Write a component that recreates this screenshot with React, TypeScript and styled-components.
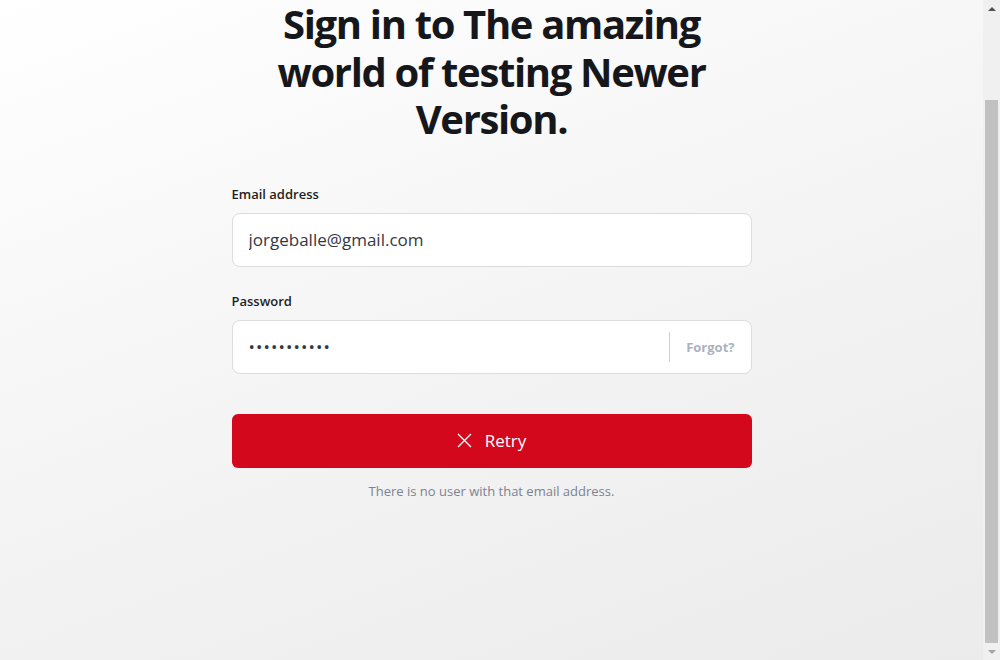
import React from "react";
import styled, { createGlobalStyle } from "styled-components";

const GlobalStyle = createGlobalStyle`
	html, body {
		margin: 0;
		padding: 0;
	}
	body {
		font-family: "Open Sans", "Noto Sans", sans-serif;
		background: #f0f0f0;
		overflow: hidden;
	}
`;

const Frame = styled.div`
	display: flex;
	height: 660px;
`;

const Main = styled.main`
	flex: 1;
	min-width: 0;
	overflow: hidden;
	display: flex;
	flex-direction: column;
	align-items: center;
	background: linear-gradient(160deg, #ffffff 0%, #f4f4f4 50%, #ebebeb 100%);
`;

const ScrollBar = styled.div`
	width: 17px;
	flex-shrink: 0;
	display: flex;
	flex-direction: column;
	background: #f0f0f0;
`;

const ScrollArrow = styled.div`
	height: 17px;
	display: flex;
	align-items: center;
	justify-content: center;
`;

const ScrollTrack = styled.div`
	flex: 1;
	display: flex;
	flex-direction: column;
	padding: 83px 2px 0;
`;

const ScrollThumb = styled.div`
	flex: 1;
	background: #c1c1c1;
`;

const Title = styled.h1`
	margin: 0;
	max-width: 460px;
	font-size: 40px;
	line-height: 47.5px;
	font-weight: 700;
	text-align: center;
	color: #16171b;
	letter-spacing: -1.35px;
`;

const Form = styled.form`
	width: 520px;
	margin-top: 42px;
	display: flex;
	flex-direction: column;
`;

const Field = styled.div<{ $gap?: number }>`
	display: flex;
	flex-direction: column;
	margin-top: ${p => p.$gap ?? 0}px;
`;

const Label = styled.label`
	font-size: 13px;
	line-height: 18px;
	font-weight: 600;
	color: #1f1f1f;
	margin-bottom: 10px;
`;

const InputBox = styled.div`
	display: flex;
	align-items: center;
	height: 54px;
	box-sizing: border-box;
	background: #ffffff;
	border: 1px solid #dcdcdc;
	border-radius: 8px;
`;

const TextInput = styled.input<{ $secret?: boolean }>`
	flex: 1;
	min-width: 0;
	height: 100%;
	border: 0;
	outline: none;
	background: transparent;
	padding: 0 16px;
	font-family: inherit;
	font-size: 17px;
	letter-spacing: ${p => (p.$secret ? "1.1px" : "0")};
	color: #333844;
`;

const ForgotLink = styled.a`
	align-self: center;
	border-left: 1px solid #cfcfcf;
	height: 30px;
	display: flex;
	align-items: center;
	padding: 0 16px;
	font-size: 13px;
	font-weight: 700;
	color: #aab2bf;
	text-decoration: none;
	cursor: pointer;
`;

const SubmitButton = styled.button`
	margin-top: 40px;
	height: 54px;
	border: 0;
	border-radius: 6px;
	background: #d3081d;
	color: #ffffff;
	font-family: inherit;
	font-size: 17px;
	display: flex;
	align-items: center;
	justify-content: center;
	gap: 13px;
	cursor: pointer;
`;

const ErrorText = styled.p`
	margin: 14px 0 0;
	text-align: center;
	font-size: 13px;
	line-height: 18px;
	color: #7d828f;
`;

const CloseIcon = () => (
	<svg width="15" height="15" viewBox="0 0 15 15" fill="none" stroke="#ffffff" strokeWidth="1.3">
		<path d="M1 1L14 14M14 1L1 14" />
	</svg>
);

const Arrow = ({ up }: { up?: boolean }) => (
	<svg width="8" height="4" viewBox="0 0 8 4">
		<path d={up ? "M0 4L4 0L8 4Z" : "M0 0L4 4L8 0Z"} fill={up ? "#505050" : "#a3a3a3"} />
	</svg>
);

export default function App() {
	return (
		<>
			<GlobalStyle />
			<Frame>
				<Main>
					<Title>Sign in to The amazing world of testing Newer Version.</Title>
					<Form onSubmit={e => e.preventDefault()}>
						<Field>
							<Label>Email address</Label>
							<InputBox>
								<TextInput type="email" defaultValue="jorgeballe@gmail.com" />
							</InputBox>
						</Field>
						<Field $gap={25}>
							<Label>Password</Label>
							<InputBox>
								<TextInput type="password" $secret defaultValue="xxxxxxxxxxx" />
								<ForgotLink>Forgot?</ForgotLink>
							</InputBox>
						</Field>
						<SubmitButton type="submit">
							<CloseIcon />
							Retry
						</SubmitButton>
						<ErrorText>There is no user with that email address.</ErrorText>
					</Form>
				</Main>
				<ScrollBar>
					<ScrollArrow>
						<Arrow up />
					</ScrollArrow>
					<ScrollTrack>
						<ScrollThumb />
					</ScrollTrack>
					<ScrollArrow>
						<Arrow />
					</ScrollArrow>
				</ScrollBar>
			</Frame>
		</>
	);
}
